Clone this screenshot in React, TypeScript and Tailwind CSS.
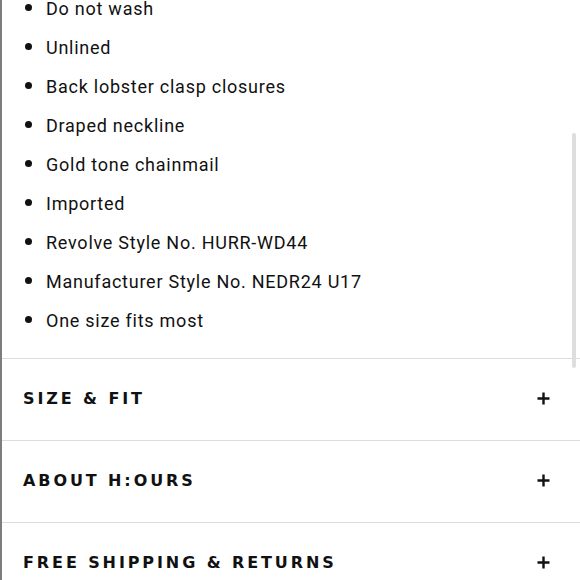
const details = [
  "Do not wash",
  "Unlined",
  "Back lobster clasp closures",
  "Draped neckline",
  "Gold tone chainmail",
  "Imported",
  "Revolve Style No. HURR-WD44",
  "Manufacturer Style No. NEDR24 U17",
  "One size fits most",
];

const sections = ["SIZE & FIT", "ABOUT H:OURS", "FREE SHIPPING & RETURNS"];

function PlusIcon() {
  return (
    <svg width="13" height="13" viewBox="0 0 13 13" className="text-[#111]">
      <path d="M6.5 0.5v12M0.5 6.5h12" stroke="currentColor" strokeWidth="2.4" fill="none" />
    </svg>
  );
}

export default function App() {
  return (
    <div className="relative h-[580px] w-[580px] overflow-hidden border-l-2 border-[#7d7d7d] bg-white text-[#111]">
      {/* product details list */}
      <ul
        className="-mt-[11px] pb-[18px]"
        style={{ fontFamily: 'Roboto, "Liberation Sans", sans-serif' }}
      >
        {details.map((item) => (
          <li key={item} className="flex h-[39px] items-center">
            <span className="ml-[23px] mr-[14px] mt-[-3px] h-[7px] w-[7px] rounded-full bg-[#111]" />
            <span className="text-[18px] leading-[39px] tracking-[0.75px]">{item}</span>
          </li>
        ))}
      </ul>

      {/* accordion headers */}
      {sections.map((title) => (
        <div
          key={title}
          className="flex h-[82px] items-center justify-between border-t border-[#dcdcdc] pb-[2px] pl-[21px] pr-[30px]"
        >
          <span
            className="text-[16px] font-bold tracking-[2.9px]"
            style={{ fontFamily: '"DejaVu Sans", sans-serif' }}
          >
            {title}
          </span>
          <PlusIcon />
        </div>
      ))}

      {/* overlay scrollbar */}
      <div className="absolute right-[4px] top-[133px] h-[235px] w-[4px] rounded-full bg-[#dedede]" />
    </div>
  );
}
